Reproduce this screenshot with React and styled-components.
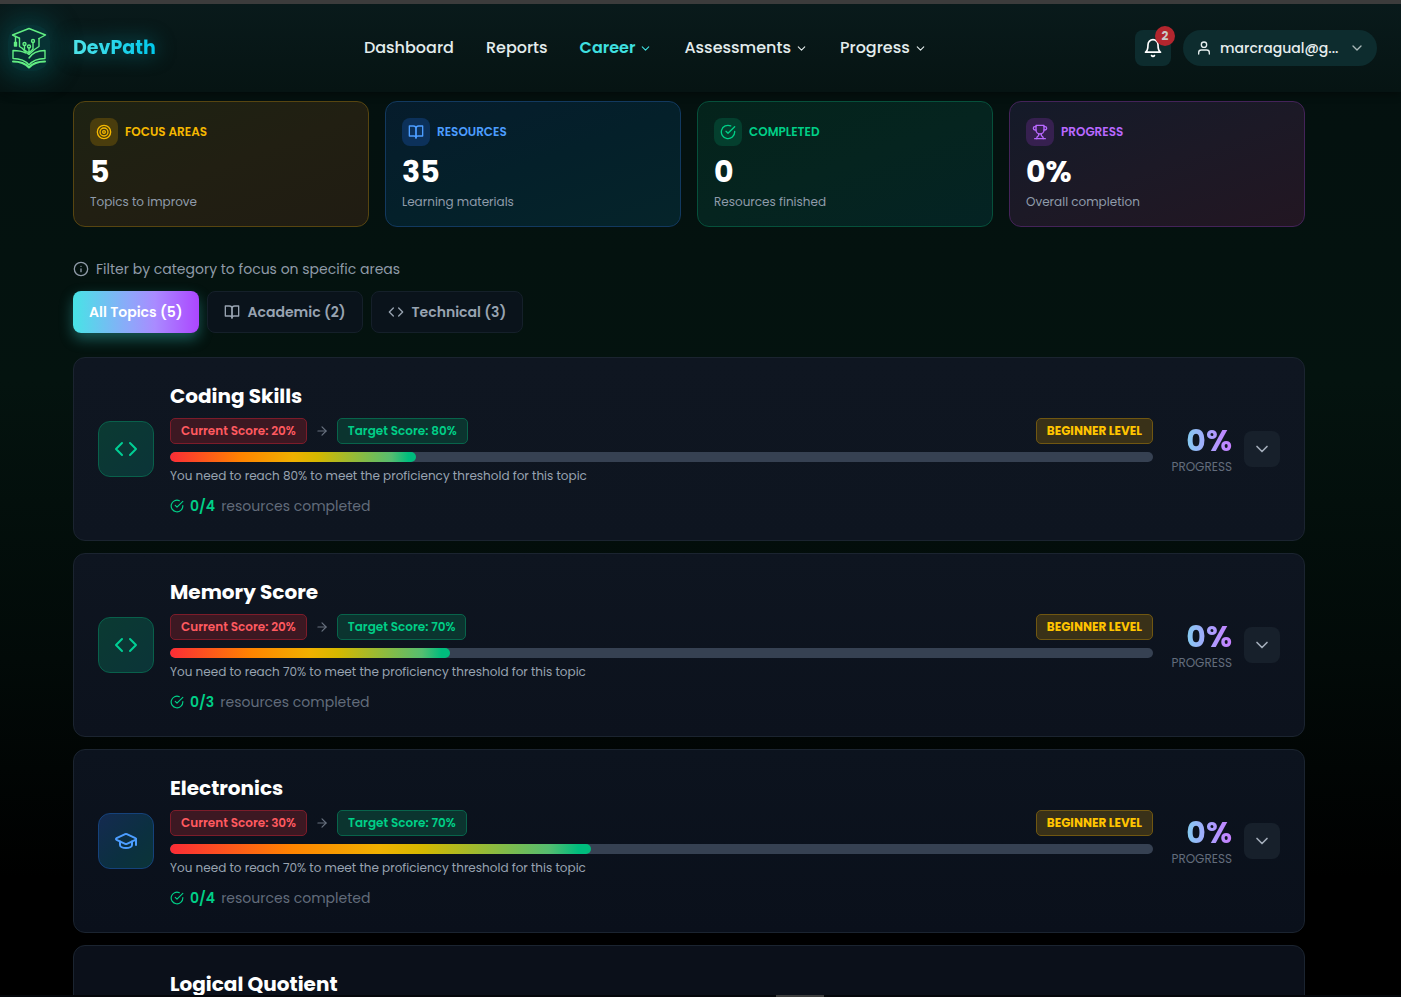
import React from "react";
import styled, { createGlobalStyle, css } from "styled-components";
import { FiTarget, FiBookOpen, FiCheckCircle, FiInfo, FiCode, FiArrowRight, FiChevronDown, FiBell, FiUser } from "react-icons/fi";
import { LuTrophy, LuGraduationCap } from "react-icons/lu";

const Global = createGlobalStyle`
  * { box-sizing: border-box; }
  body {
    margin: 0;
    background: #000;
    font-family: Poppins, Inter, sans-serif;
    color: #fff;
    overflow: hidden;
  }
  button { font-family: inherit; cursor: pointer; }
  h2, p { margin: 0; }
  svg { flex: none; display: block; }
`;

const Page = styled.div`
  height: 100vh;
  overflow: hidden;
  display: flex;
  flex-direction: column;
  border-top: 4px solid #3c3c3c;
  background: linear-gradient(#04100f 0%, #04130f 38%, #020a08 66%, #000 88%);
`;

const Header = styled.header`
  flex: none;
  height: 88px;
  padding: 0 24px 0 8px;
  display: flex;
  justify-content: space-between;
  align-items: center;
  background: linear-gradient(#091a1b, #061413);
  box-shadow: 0 2px 8px rgba(0, 0, 0, 0.4);
`;

const Brand = styled.a`
  display: flex;
  align-items: center;
  gap: 23px;
  text-decoration: none;
`;

const Logo = styled.svg`
  width: 42px;
  height: 46px;
  border-radius: 16px;
  box-shadow: 0 0 24px 8px rgba(6, 110, 115, 0.35);
  background: rgba(6, 100, 105, 0.35);
`;

const BrandName = styled.span`
  font-size: 19px;
  line-height: 28px;
  font-weight: 700;
  background: linear-gradient(90deg, #4fe3e8, #00c8ec);
  -webkit-background-clip: text;
  background-clip: text;
  color: transparent;
  filter: drop-shadow(0 0 10px rgba(0, 200, 220, 0.5));
`;

const Nav = styled.nav`
  display: flex;
  align-items: center;
  gap: 32px;
`;

const NavLink = styled.a`
  display: flex;
  align-items: center;
  gap: 4px;
  font-size: 16px;
  line-height: 24px;
  text-decoration: none;
  white-space: nowrap;
  font-weight: ${(p) => (p.$active ? 600 : 500)};
  color: ${(p) => (p.$active ? "#3fe0e0" : "#e3ecec")};
`;

const Account = styled.div`
  display: flex;
  justify-content: flex-end;
  gap: 12px;
`;

const BellButton = styled.button`
  position: relative;
  width: 36px;
  height: 36px;
  border: 0;
  border-radius: 8px;
  background: #0d2c2e;
  color: #fff;
  display: grid;
  place-items: center;
  padding: 0;
`;

const Count = styled.span`
  position: absolute;
  top: -4px;
  right: -4px;
  width: 20px;
  height: 20px;
  border-radius: 50%;
  background: #b3262e;
  color: #c9c9c9;
  font-size: 12px;
  line-height: 20px;
  font-weight: 700;
`;

const UserButton = styled.button`
  height: 36px;
  width: 194px;
  padding: 0 12px 0 13px;
  border: 0;
  border-radius: 18px;
  background: #0d2c2e;
  color: #e6eeee;
  display: flex;
  align-items: center;
  gap: 8px;
  font-size: 14px;
  font-weight: 500;
`;

const Email = styled.span`
  flex: 1;
  text-align: left;
  white-space: nowrap;
`;

const Main = styled.main`
  flex: 1;
  min-height: 0;
  overflow: hidden;
  padding: 9px 96px 0 73px;
`;

const Stats = styled.section`
  display: grid;
  grid-template-columns: repeat(4, 1fr);
  gap: 16px;
`;

const tones = {
  amber: css`
    --tone: #f5b800; --chip: #4a3d0d; --line: #574510;
    background: linear-gradient(160deg, #1d2212, #211f12 50%, #201c12);
  `,
  blue: css`
    --tone: #4c9dff; --chip: #0c315a; --line: #12395f;
    background: linear-gradient(160deg, #061c2c, #04202a 50%, #05242a);
  `,
  green: css`
    --tone: #00cf87; --chip: #043f2e; --line: #06503b;
    background: linear-gradient(160deg, #04231b, #05241f 50%, #042323);
  `,
  purple: css`
    --tone: #b968ff; --chip: #36204f; --line: #442359;
    background: linear-gradient(160deg, #141a29, #1c1926 50%, #221622);
  `,
};

const StatCard = styled.article`
  height: 126px;
  padding: 16px;
  border-radius: 12px;
  ${(p) => tones[p.$tone]}
  border: 1px solid var(--line);
`;

const StatHead = styled.div`
  display: flex;
  align-items: center;
  gap: 7px;
  color: var(--tone);
  font-size: 12px;
  line-height: 16px;
  font-weight: 600;
`;

const StatIcon = styled.span`
  width: 28px;
  height: 28px;
  border-radius: 8px;
  background: var(--chip);
  display: grid;
  place-items: center;
`;

const StatValue = styled.p`
  margin-top: 8px;
  font-size: 30px;
  line-height: 36px;
  font-weight: 700;
`;

const StatNote = styled.p`
  margin-top: 4px;
  font-size: 12px;
  line-height: 16px;
  color: #8f9baa;
`;

const FilterHint = styled.p`
  margin-top: 32px;
  display: flex;
  align-items: center;
  gap: 7px;
  font-size: 14px;
  line-height: 20px;
  color: #909ba8;
`;

const Filters = styled.div`
  margin-top: 12px;
  display: flex;
  gap: 8px;
`;

const FilterButton = styled.button`
  height: 42px;
  display: flex;
  align-items: center;
  gap: 8px;
  padding: 0 16px;
  border-radius: 8px;
  border: 1px solid #15202a;
  background: #0a131b;
  color: #98a3b1;
  font-size: 14px;
  font-weight: 600;
  white-space: nowrap;
  ${(p) =>
    p.$active &&
    css`
      border: 0;
      color: #fff;
      background: linear-gradient(90deg, #47e4e6, #8ea7fa 45%, #a98bff 65%, #ac46ff);
      box-shadow: 0 6px 14px rgba(64, 224, 224, 0.35);
    `}
`;

const Topics = styled.section`
  margin-top: 24px;
  display: grid;
  gap: 12px;
`;

const TopicCard = styled.article`
  height: 184px;
  padding: 24px;
  display: flex;
  align-items: center;
  border: 1px solid #1b2430;
  border-radius: 12px;
  background: ${(p) => p.$shade};
`;

const TopicIcon = styled.span`
  flex: none;
  width: 56px;
  height: 56px;
  display: grid;
  place-items: center;
  border-radius: 12px;
  border: 1px solid ${(p) => (p.$blue ? "#15427b" : "#09604b")};
  background: ${(p) =>
    p.$blue ? "linear-gradient(135deg, #142a50, #0b3040 60%, #0b3438)" : "linear-gradient(135deg, #0b3a32, #0b3438)"};
  color: ${(p) => (p.$blue ? "#4c9dff" : "#00cf94")};
`;

const TopicBody = styled.div`
  flex: 1;
  min-width: 0;
  margin: 0 16px;
`;

const TopicTitle = styled.h2`
  font-size: 20px;
  line-height: 28px;
  font-weight: 700;
`;

const Scores = styled.div`
  margin-top: 8px;
  display: flex;
  align-items: center;
  gap: 8px;
  color: #68717f;
`;

const badgeTones = {
  red: "color:#ff5a60;background:#3c1822;border-color:#7c1c2a;",
  green: "color:#00cf87;background:#0b342f;border-color:#08644b;",
  amber: "color:#ffc400;background:#393118;border-color:#705711;",
};

const Badge = styled.span`
  height: 26px;
  padding: 0 10px;
  display: flex;
  align-items: center;
  border: 1px solid;
  border-radius: 5px;
  font-size: 12px;
  font-weight: ${(p) => (p.$tone === "amber" ? 700 : 600)};
  white-space: nowrap;
  ${(p) => badgeTones[p.$tone]}
`;

const Level = styled.div`
  margin-left: auto;
`;

const Track = styled.div`
  margin-top: 8px;
  height: 10px;
  border-radius: 5px;
  background: #364152;
  overflow: hidden;
`;

const Fill = styled.div`
  height: 100%;
  border-radius: 5px;
  background: linear-gradient(90deg, #fb2c36, #ff8400 29%, #f0b100 50%, #d5b800 60%, #55bd70 90%, #00bc7d 97%);
`;

const Note = styled.p`
  margin-top: 6px;
  font-size: 12px;
  line-height: 16px;
  color: #98a3b1;
`;

const Done = styled.p`
  margin-top: 12px;
  display: flex;
  align-items: center;
  gap: 6px;
  font-size: 14px;
  line-height: 20px;
  color: #626c7b;
  svg, strong { color: #00cf87; }
  strong { font-weight: 600; }
`;

const Progress = styled.div`
  width: 63px;
  display: grid;
  justify-items: end;
`;

const Percent = styled.span`
  font-size: 30px;
  line-height: 36px;
  font-weight: 700;
  background: linear-gradient(90deg, #83cdf0, #a9a2ff 50%, #c77dff);
  -webkit-background-clip: text;
  background-clip: text;
  color: transparent;
`;

const ProgressLabel = styled.span`
  font-size: 12px;
  line-height: 16px;
  color: #626c7b;
`;

const Expand = styled.button`
  flex: none;
  width: 36px;
  height: 36px;
  margin-left: 12px;
  padding: 0;
  display: grid;
  place-items: center;
  border: 0;
  border-radius: 8px;
  background: #17202b;
  color: #a4adba;
`;

const BottomEdge = styled.div`
  flex: none;
  height: 2px;
  background: #05070b;
  display: grid;
  grid-template-columns: 1240fr 48px 922fr;
`;

const EdgeHandle = styled.span`
  grid-column: 2;
  background: #3c3c3c;
`;

function LogoMark() {
  return (
    <Logo viewBox="8 24 42 46" fill="none" stroke="#62ee83" strokeWidth="1.4" strokeLinejoin="round" strokeLinecap="round" aria-hidden="true">
      <path d="M19 37 12.500 34 29 27.500 45.500 34 39 37.500" />
      <path d="M19.500 37v8.500l3 2M39 37.500v8l-4.500 3M22.500 47.500l3.500 4 3 2 5.500-5" />
      <path d="M24.500 44.500V49l4.500 3M29 47v6M33 41.500V48l-4 4" />
      <circle cx="33" cy="40" r="1.500" />
      <circle cx="24.500" cy="43" r="1.500" />
      <circle cx="29" cy="45.500" r="1.500" />
      <path d="M15.500 35.500V41" />
      <path d="M14.500 41.500h2v3.500h-2Z" fill="#62ee83" />
      <path d="M25.500 52c-3.500-2-8-2.500-12.500-2.500v8c7 0 12 1.500 16 6.500 4-5 9-6.500 16-6.500v-8c-7 0-12.500 2-16 7.500" />
      <path d="M13 60.500c7 0 12 1.500 16 6 4-4.500 9-6 16-6" strokeWidth="2" />
    </Logo>
  );
}

const nav = [
  { label: "Dashboard" },
  { label: "Reports" },
  { label: "Career", menu: true, active: true },
  { label: "Assessments", menu: true },
  { label: "Progress", menu: true },
];

const stats = [
  { tone: "amber", icon: FiTarget, label: "FOCUS AREAS", value: "5", note: "Topics to improve" },
  { tone: "blue", icon: FiBookOpen, label: "RESOURCES", value: "35", note: "Learning materials" },
  { tone: "green", icon: FiCheckCircle, label: "COMPLETED", value: "0", note: "Resources finished" },
  { tone: "purple", icon: LuTrophy, label: "PROGRESS", value: "0%", note: "Overall completion" },
];

const topics = [
  { title: "Coding Skills", now: 20, target: 80, fill: 25, total: 4, shade: "linear-gradient(#0f1621, #0e1520)" },
  { title: "Memory Score", now: 20, target: 70, fill: 28.5, total: 3, shade: "linear-gradient(#0e1520, #0c121d)" },
  { title: "Electronics", now: 30, target: 70, fill: 42.86, total: 4, blue: true, shade: "linear-gradient(#0c131e, #0a101b)" },
  { title: "Logical Quotient", now: 30, target: 70, fill: 42.86, total: 4, shade: "#0b101a" },
];

export default function App() {
  return (
    <>
      <Global />
      <Page>
        <Header>
          <Brand href="#">
            <LogoMark />
            <BrandName>DevPath</BrandName>
          </Brand>
          <Nav>
            {nav.map((n) => (
              <NavLink key={n.label} href="#" $active={n.active}>
                {n.label}
                {n.menu && <FiChevronDown size={13} />}
              </NavLink>
            ))}
          </Nav>
          <Account>
            <BellButton aria-label="Notifications">
              <FiBell size={20} />
              <Count>2</Count>
            </BellButton>
            <UserButton>
              <FiUser size={16} />
              <Email>marcragual@g...</Email>
              <FiChevronDown size={16} color="#a9b8b8" />
            </UserButton>
          </Account>
        </Header>
        <Main>
          <Stats>
            {stats.map(({ icon: Icon, ...s }) => (
              <StatCard key={s.label} $tone={s.tone}>
                <StatHead>
                  <StatIcon><Icon size={16} /></StatIcon>
                  {s.label}
                </StatHead>
                <StatValue>{s.value}</StatValue>
                <StatNote>{s.note}</StatNote>
              </StatCard>
            ))}
          </Stats>
          <FilterHint><FiInfo size={16} />Filter by category to focus on specific areas</FilterHint>
          <Filters>
            <FilterButton $active>All Topics (5)</FilterButton>
            <FilterButton><FiBookOpen size={16} />Academic (2)</FilterButton>
            <FilterButton><FiCode size={16} />Technical (3)</FilterButton>
          </Filters>
          <Topics>
            {topics.map((t) => (
              <TopicCard key={t.title} $shade={t.shade}>
                <TopicIcon $blue={t.blue}>
                  {t.blue ? <LuGraduationCap size={24} /> : <FiCode size={24} />}
                </TopicIcon>
                <TopicBody>
                  <TopicTitle>{t.title}</TopicTitle>
                  <Scores>
                    <Badge $tone="red">Current Score: {t.now}%</Badge>
                    <FiArrowRight size={14} />
                    <Badge $tone="green">Target Score: {t.target}%</Badge>
                    <Level><Badge $tone="amber">BEGINNER LEVEL</Badge></Level>
                  </Scores>
                  <Track><Fill style={{ width: `${t.fill}%` }} /></Track>
                  <Note>You need to reach {t.target}% to meet the proficiency threshold for this topic</Note>
                  <Done><FiCheckCircle size={14} /><strong>0/{t.total}</strong>resources completed</Done>
                </TopicBody>
                <Progress>
                  <Percent>0%</Percent>
                  <ProgressLabel>PROGRESS</ProgressLabel>
                </Progress>
                <Expand aria-label={`Expand ${t.title}`}><FiChevronDown size={20} /></Expand>
              </TopicCard>
            ))}
          </Topics>
        </Main>
        <BottomEdge><EdgeHandle /></BottomEdge>
      </Page>
    </>
  );
}
